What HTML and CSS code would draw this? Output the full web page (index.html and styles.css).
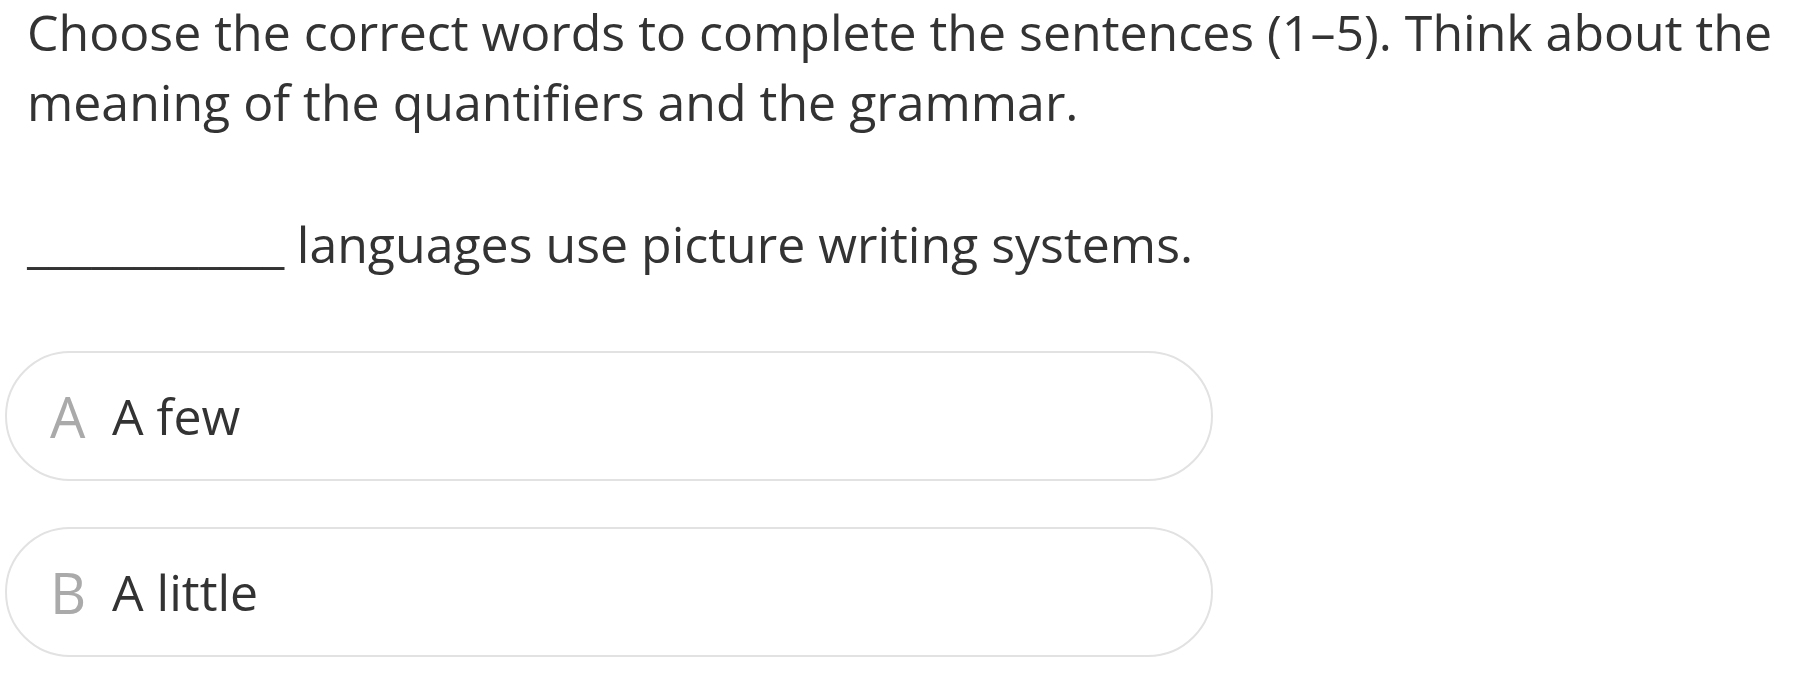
FILE: index.html
```html
<!DOCTYPE html>
<html lang="en">
<head>
<meta charset="utf-8">
<title>Quantifiers</title>
<link rel="stylesheet" href="styles.css">
</head>
<body>
<main class="quiz">
  <p class="instructions">Choose the correct words to complete the sentences (1–5). Think about the meaning of the quantifiers and the grammar.</p>
  <p class="question"><span class="blank">____________</span> languages use picture writing systems.</p>
  <ul class="options">
    <li class="option"><span class="option-label">A</span><span class="option-text">A few</span></li>
    <li class="option"><span class="option-label">B</span><span class="option-text">A little</span></li>
  </ul>
</main>
</body>
</html>
```
FILE: styles.css
```css
html, body {
  margin: 0;
  padding: 0;
  background: #ffffff;
}

body {
  font-family: "Open Sans", "Noto Sans", sans-serif;
  color: #333333;
}

.quiz {
  width: 1208px;
  padding: 0 5px;
}

.instructions {
  width: 1760px;
  margin: -3px 0 0;
  padding-left: 22px;
  font-size: 50px;
  line-height: 70px;
}

.question {
  margin: 72px 0 0;
  padding-left: 22px;
  font-size: 50px;
  line-height: 70px;
  white-space: nowrap;
}

.blank {
  letter-spacing: -0.5px;
}

.options {
  list-style: none;
  margin: 72px 0 0;
  padding: 0;
  display: flex;
  flex-direction: column;
  gap: 46px;
}

.option {
  box-sizing: border-box;
  height: 130px;
  border: 2px solid #e2e2e2;
  border-radius: 65px;
  display: flex;
  align-items: center;
  padding-left: 43px;
}

.option-label {
  width: 62px;
  font-size: 56px;
  color: #aaaaaa;
}

.option-text {
  font-size: 50px;
  color: #333333;
}
```
